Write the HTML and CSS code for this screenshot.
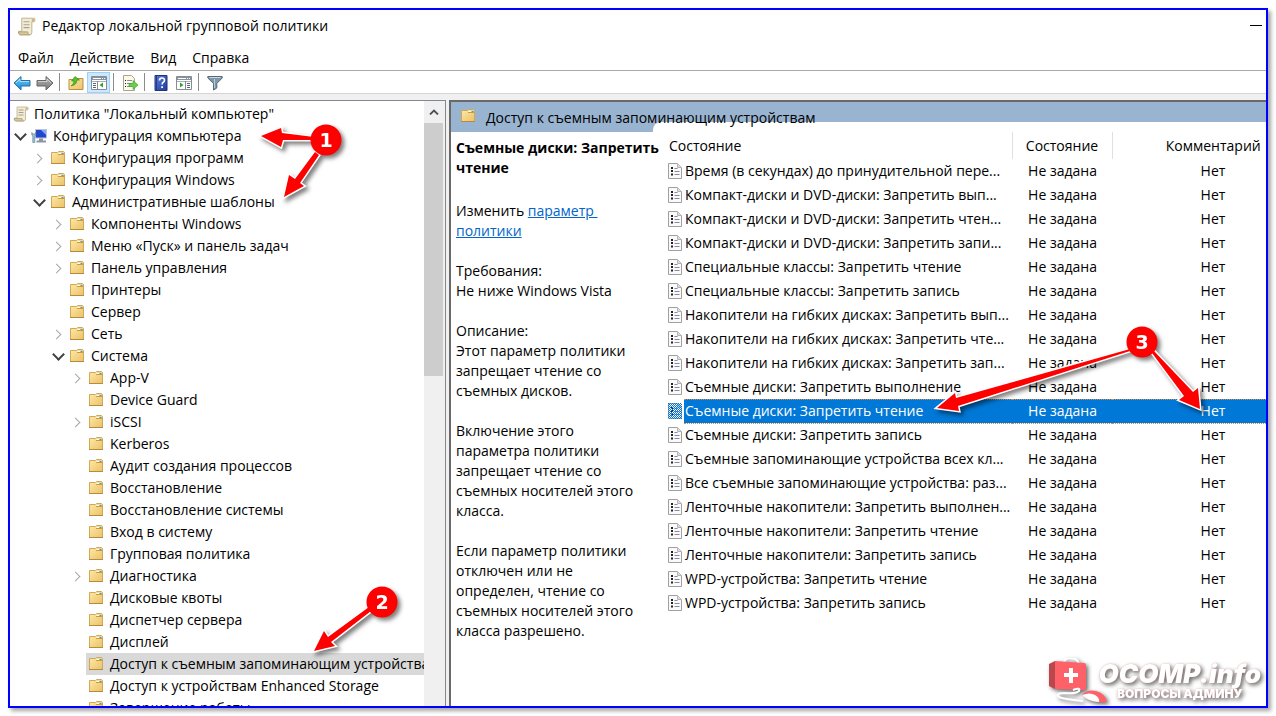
FILE: index.html
```html
<!DOCTYPE html>
<html lang="ru">
<head>
  <meta charset="UTF-8">
  <title>Редактор локальной групповой политики</title>
  <link rel="stylesheet" href="styles.css">
</head>
<body>

  <!-- Иконки -->
  <svg class="sprite" aria-hidden="true">
    <linearGradient id="grad-folder" x1="0" y1="0" x2="1" y2="1">
      <stop offset="0" stop-color="#ffe9a6"/>
      <stop offset="1" stop-color="#e9c269"/>
    </linearGradient>
    <linearGradient id="grad-blue" x1="0" y1="0" x2="0" y2="1">
      <stop offset="0" stop-color="#6fd0fb"/>
      <stop offset="1" stop-color="#1488d6"/>
    </linearGradient>
    <linearGradient id="grad-gray" x1="0" y1="0" x2="0" y2="1">
      <stop offset="0" stop-color="#b5b5b5"/>
      <stop offset="1" stop-color="#777"/>
    </linearGradient>
    <linearGradient id="grad-help" x1="0" y1="0" x2="1" y2="1">
      <stop offset="0" stop-color="#5f7fd8"/>
      <stop offset="1" stop-color="#1f3a9c"/>
    </linearGradient>
    <pattern id="dots" width="2" height="2" patternUnits="userSpaceOnUse">
      <path d="M0 0h1v1H0zM1 1h1v1H1z" fill="#0078d7"/>
    </pattern>
    <symbol id="folder" viewBox="0 0 16 16">
      <path d="M1.500 2.500h6l1-1h5l1 1v11h-13z" fill="url(#grad-folder)" stroke="#d0a858"/>
      <path d="M8 4.500h6" stroke="#c79a45"/>
      <path d="M8.500 3.500h3" stroke="#fff"/>
      <path d="M11.500 3.500h2" stroke="#3f9ad8"/>
      <path d="M1 13.500h14" stroke="#b88a3a"/>
    </symbol>
    <symbol id="scroll" viewBox="0 0 16 16">
      <path d="M4 1h10.500q1.500 1.500 0 3h-2v9q0 2-2 2h-8q-2-1-1-3h2.500z" fill="#f4ecd2" stroke="#b5a684" stroke-width=".7"/>
      <path d="M1.500 12.500h7.500q0 2 1.500 2.500h-8q-1.500-1-1-2.500z" fill="#d9c795" stroke="#a79a78" stroke-width=".7"/>
      <path d="M5.500 4h5M5.500 6.500h5M5.500 9h5" stroke="#a3a09a"/>
      <path d="M12.500 4V2q1-1.500 2 0v2z" fill="#cdb77e"/>
    </symbol>
    <symbol id="computer" viewBox="0 0 16 16">
      <path d="M4.500 1.500h11v8.500h-11z" fill="#2346cf" stroke="#bcc4cf"/>
      <path d="M10 2h5v5z" fill="#7fa8f5"/>
      <path d="M8 10.500h4v2h3v2H5.500v-2H8z" fill="#8995a3"/>
      <path d="M.8 4.500V7l1 1v6.500h2V8l1-1V4.500L3.800 6h-2z" fill="#9fc1d8" stroke="#507892" stroke-width=".6"/>
    </symbol>
    <symbol id="policy" viewBox="0 0 14 16">
      <path d="M.5.500h9l4 4v11h-13z" fill="#fafafa" stroke="#a0a0a0"/>
      <path d="M9.500.500v4h4" fill="#ddd" stroke="#b5b5b5"/>
      <path d="M3 4h2v2H3zM3 7h2v2H3zM3 10.500h2v2H3z" fill="#222"/>
      <path d="M6.500 5.500h3M6.500 8.500h5M6.500 11.500h5" stroke="#8888a2"/>
    </symbol>
    <symbol id="arrow" viewBox="0 0 18 16">
      <path d="M1 8l7-6.500v4h9v5.500h-9v4z" stroke-width="1"/>
      <path d="M3 8l4-4v2.500h9" fill="none" stroke="#fff" stroke-opacity=".5"/>
    </symbol>
    <symbol id="window" viewBox="0 0 16 16">
      <path d="M.5 1.500h15v13H.5z" fill="#fff" stroke="#858c96"/>
      <path d="M1 2h14v3H1z" fill="#8b939f"/>
      <path d="M2 3.500h8M11 3.500h1M13 3.500h1" stroke="#fff"/>
      <path d="M1 6.500h14" stroke="#aab0b8"/>
    </symbol>
  </svg>

  <main class="window">
    <header class="titlebar">
      <svg class="title-icon"><use href="#scroll"/></svg>
      <span class="title">Редактор локальной групповой политики</span>
      <button class="minimize" aria-label="Свернуть"></button>
    </header>

    <nav class="menu">
      <button>Файл</button>
      <button>Действие</button>
      <button>Вид</button>
      <button>Справка</button>
    </nav>

    <div class="toolbar">
      <button aria-label="Назад"><svg class="arrow-back"><use href="#arrow"/></svg></button>
      <button aria-label="Вперед"><svg class="arrow-next"><use href="#arrow"/></svg></button>
      <span class="sep"></span>
      <button aria-label="На уровень вверх">
        <svg viewBox="0 0 16 16">
          <path d="M1 4.500h5l1-1h8v11H1z" fill="url(#grad-folder)" stroke="#b98f41"/>
          <path d="M3 11q3-2 3-5H3.500L7 1.500 11.500 5H9q0 5-6 6z" fill="#55c02d" stroke="#2c8a18" stroke-width=".6"/>
        </svg>
      </button>
      <button class="active" aria-label="Дерево консоли">
        <svg viewBox="0 0 16 16">
          <use href="#window"/>
          <path d="M6.500 6v8" stroke="#858c96"/>
          <path d="M2 8.500h3M2 10.500h3M2 12.500h3" stroke="#5a6575"/>
          <path d="M12 7.500v5L8.500 10z" fill="#2fa52c"/>
        </svg>
      </button>
      <span class="sep"></span>
      <button aria-label="Экспорт списка">
        <svg viewBox="0 0 16 16">
          <path d="M1.500.5h8l3 3v12h-11z" fill="#fdf9e8" stroke="#a8a48f"/>
          <path d="M3 5.500h1M3 8.500h1M3 11.500h1" stroke="#222"/>
          <path d="M5 5.500h5M5 8.500h5M5 11.500h5" stroke="#8889a8"/>
          <path d="M7 8.500h4V5.500l5 4.500-5 4.500v-3H7z" fill="#67cf4c" stroke="#3da02b" stroke-width=".6"/>
        </svg>
      </button>
      <span class="sep"></span>
      <button aria-label="Справка">
        <svg viewBox="0 0 16 16">
          <path d="M2 .5h12v15H2z" fill="url(#grad-help)" stroke="#1c3279"/>
          <path d="M3.500 1v14" stroke="#203a94"/>
          <path d="M6.500 5.500q0-2.500 2.500-2.500 2.500 0 2.500 2.200 0 1.300-1.300 2.100-1.100.7-1.100 2.200" fill="none" stroke="#fff" stroke-width="1.600"/>
          <path d="M8.200 11.200h1.800v1.800H8.200z" fill="#fff"/>
        </svg>
      </button>
      <button aria-label="Область действий">
        <svg viewBox="0 0 16 16">
          <use href="#window"/>
          <path d="M9.500 6v8" stroke="#858c96"/>
          <path d="M11 8.500h3M11 10.500h3M11 12.500h3" stroke="#5a6575"/>
          <path d="M4 7.500v5L7.500 10z" fill="#2fa52c"/>
        </svg>
      </button>
      <span class="sep"></span>
      <button aria-label="Фильтр">
        <svg viewBox="0 0 16 16">
          <path d="M.8 1.500h14.400v1.500L9.800 8.500V13L6.500 15V8.500L.8 3z" fill="#7f97a8" stroke="#536a7b"/>
          <path d="M2.500 2.500h11" stroke="#c9d8e2"/>
          <path d="M7.500 4v9" stroke="#b9cbd7"/>
        </svg>
      </button>
    </div>

    <div class="panes">
      <section class="tree-pane">
        <ul class="tree">
          <li class="level-0"><svg><use href="#scroll"/></svg>Политика "Локальный компьютер"</li>
          <li class="level-1"><button class="toggle open" aria-label="Свернуть"></button><svg><use href="#computer"/></svg>Конфигурация компьютера</li>
          <li class="level-2"><button class="toggle" aria-label="Развернуть"></button><svg><use href="#folder"/></svg>Конфигурация программ</li>
          <li class="level-2"><button class="toggle" aria-label="Развернуть"></button><svg><use href="#folder"/></svg>Конфигурация Windows</li>
          <li class="level-2"><button class="toggle open" aria-label="Свернуть"></button><svg><use href="#folder"/></svg>Административные шаблоны</li>
          <li class="level-3"><button class="toggle" aria-label="Развернуть"></button><svg><use href="#folder"/></svg>Компоненты Windows</li>
          <li class="level-3"><button class="toggle" aria-label="Развернуть"></button><svg><use href="#folder"/></svg>Меню «Пуск» и панель задач</li>
          <li class="level-3"><button class="toggle" aria-label="Развернуть"></button><svg><use href="#folder"/></svg>Панель управления</li>
          <li class="level-3 leaf"><svg><use href="#folder"/></svg>Принтеры</li>
          <li class="level-3 leaf"><svg><use href="#folder"/></svg>Сервер</li>
          <li class="level-3"><button class="toggle" aria-label="Развернуть"></button><svg><use href="#folder"/></svg>Сеть</li>
          <li class="level-3"><button class="toggle open" aria-label="Свернуть"></button><svg><use href="#folder"/></svg>Система</li>
          <li class="level-4"><button class="toggle" aria-label="Развернуть"></button><svg><use href="#folder"/></svg>App-V</li>
          <li class="level-4 leaf"><svg><use href="#folder"/></svg>Device Guard</li>
          <li class="level-4"><button class="toggle" aria-label="Развернуть"></button><svg><use href="#folder"/></svg>iSCSI</li>
          <li class="level-4 leaf"><svg><use href="#folder"/></svg>Kerberos</li>
          <li class="level-4 leaf"><svg><use href="#folder"/></svg>Аудит создания процессов</li>
          <li class="level-4 leaf"><svg><use href="#folder"/></svg>Восстановление</li>
          <li class="level-4 leaf"><svg><use href="#folder"/></svg>Восстановление системы</li>
          <li class="level-4 leaf"><svg><use href="#folder"/></svg>Вход в систему</li>
          <li class="level-4 leaf"><svg><use href="#folder"/></svg>Групповая политика</li>
          <li class="level-4"><button class="toggle" aria-label="Развернуть"></button><svg><use href="#folder"/></svg>Диагностика</li>
          <li class="level-4 leaf"><svg><use href="#folder"/></svg>Дисковые квоты</li>
          <li class="level-4 leaf"><svg><use href="#folder"/></svg>Диспетчер сервера</li>
          <li class="level-4 leaf"><svg><use href="#folder"/></svg>Дисплей</li>
          <li class="level-4 leaf"><span class="current"><svg><use href="#folder"/></svg>Доступ к съемным запоминающим устройствам</span></li>
          <li class="level-4 leaf"><svg><use href="#folder"/></svg>Доступ к устройствам Enhanced Storage</li>
          <li class="level-4 leaf"><svg><use href="#folder"/></svg>Завершение работы</li>
        </ul>
        <div class="scrollbar">
          <button aria-label="Вверх"><svg viewBox="0 0 10 6"><path d="M1 5.500l4-4 4 4" fill="none" stroke="#505050" stroke-width="1.800"/></svg></button>
          <div class="thumb"></div>
        </div>
      </section>

      <section class="details">
        <div class="details-head">
          <svg><use href="#folder"/></svg>
          <h1>Доступ к съемным запоминающим устройствам</h1>
        </div>
        <div class="details-body">
          <div class="description">
            <h2>Съемные диски: Запретить<br>чтение</h2>
            <p>Изменить <a href="#">параметр&nbsp; политики</a></p>
            <p>Требования:<br>Не ниже Windows Vista</p>
            <p>Описание:<br>Этот параметр политики запрещает чтение со съемных дисков.</p>
            <p>Включение этого параметра политики запрещает чтение со съемных носителей этого класса.</p>
            <p>Если параметр политики отключен или не определен, чтение со съемных носителей этого класса разрешено.</p>
          </div>

          <div class="list">
            <table>
              <thead>
                <tr><th class="col-name" colspan="2">Состояние</th><th class="col-state">Состояние</th><th class="col-comment">Комментарий</th></tr>
              </thead>
              <tbody>
                <tr><td class="icon"><svg><use href="#policy"/></svg></td><td>Время (в секундах) до принудительной пере...</td><td class="col-state">Не задана</td><td class="col-comment">Нет</td></tr>
                <tr><td class="icon"><svg><use href="#policy"/></svg></td><td>Компакт-диски и DVD-диски: Запретить вып...</td><td class="col-state">Не задана</td><td class="col-comment">Нет</td></tr>
                <tr><td class="icon"><svg><use href="#policy"/></svg></td><td>Компакт-диски и DVD-диски: Запретить чтен...</td><td class="col-state">Не задана</td><td class="col-comment">Нет</td></tr>
                <tr><td class="icon"><svg><use href="#policy"/></svg></td><td>Компакт-диски и DVD-диски: Запретить запи...</td><td class="col-state">Не задана</td><td class="col-comment">Нет</td></tr>
                <tr><td class="icon"><svg><use href="#policy"/></svg></td><td>Специальные классы: Запретить чтение</td><td class="col-state">Не задана</td><td class="col-comment">Нет</td></tr>
                <tr><td class="icon"><svg><use href="#policy"/></svg></td><td>Специальные классы: Запретить запись</td><td class="col-state">Не задана</td><td class="col-comment">Нет</td></tr>
                <tr><td class="icon"><svg><use href="#policy"/></svg></td><td>Накопители на гибких дисках: Запретить вып...</td><td class="col-state">Не задана</td><td class="col-comment">Нет</td></tr>
                <tr><td class="icon"><svg><use href="#policy"/></svg></td><td>Накопители на гибких дисках: Запретить чте...</td><td class="col-state">Не задана</td><td class="col-comment">Нет</td></tr>
                <tr><td class="icon"><svg><use href="#policy"/></svg></td><td>Накопители на гибких дисках: Запретить зап...</td><td class="col-state">Не задана</td><td class="col-comment">Нет</td></tr>
                <tr><td class="icon"><svg><use href="#policy"/></svg></td><td>Съемные диски: Запретить выполнение</td><td class="col-state">Не задана</td><td class="col-comment">Нет</td></tr>
                <tr class="selected"><td class="icon"><svg><use href="#policy"/><rect width="14" height="16" fill="url(#dots)"/></svg></td><td>Съемные диски: Запретить чтение</td><td class="col-state">Не задана</td><td class="col-comment">Нет</td></tr>
                <tr><td class="icon"><svg><use href="#policy"/></svg></td><td>Съемные диски: Запретить запись</td><td class="col-state">Не задана</td><td class="col-comment">Нет</td></tr>
                <tr><td class="icon"><svg><use href="#policy"/></svg></td><td>Съемные запоминающие устройства всех кл...</td><td class="col-state">Не задана</td><td class="col-comment">Нет</td></tr>
                <tr><td class="icon"><svg><use href="#policy"/></svg></td><td>Все съемные запоминающие устройства: раз...</td><td class="col-state">Не задана</td><td class="col-comment">Нет</td></tr>
                <tr><td class="icon"><svg><use href="#policy"/></svg></td><td>Ленточные накопители: Запретить выполнен...</td><td class="col-state">Не задана</td><td class="col-comment">Нет</td></tr>
                <tr><td class="icon"><svg><use href="#policy"/></svg></td><td>Ленточные накопители: Запретить чтение</td><td class="col-state">Не задана</td><td class="col-comment">Нет</td></tr>
                <tr><td class="icon"><svg><use href="#policy"/></svg></td><td>Ленточные накопители: Запретить запись</td><td class="col-state">Не задана</td><td class="col-comment">Нет</td></tr>
                <tr><td class="icon"><svg><use href="#policy"/></svg></td><td>WPD-устройства: Запретить чтение</td><td class="col-state">Не задана</td><td class="col-comment">Нет</td></tr>
                <tr><td class="icon"><svg><use href="#policy"/></svg></td><td>WPD-устройства: Запретить запись</td><td class="col-state">Не задана</td><td class="col-comment">Нет</td></tr>
              </tbody>
            </table>
          </div>
        </div>
      </section>
    </div>
  </main>

  <!-- Пометки со стрелками -->
  <svg class="callout callout-1" viewBox="250 115 110 95">
    <path d="M261 136l20-8 1 5 32 4v3h-31l-2 7z"/>
    <path d="M284 197l5-22 6 4 20-27 4 3-19 28 4 3z"/>
    <circle cx="326" cy="140" r="15.500"/>
    <text x="326" y="147">1</text>
  </svg>
  <svg class="callout callout-2" viewBox="300 580 110 85">
    <path d="M314 651l10-20 4 6 41-30 2 4-40 31 4 4z"/>
    <circle cx="382" cy="602" r="15.500"/>
    <text x="382" y="609">2</text>
  </svg>
  <svg class="callout callout-3" viewBox="926 320 290 100">
    <path d="M937 408l18-15 1 5 174-49v2l-172 55 1 5z"/>
    <path d="M1200 409l-2-21-5 4-39-41-2 2 32 43-5 4z"/>
    <circle cx="1142" cy="342" r="15.500"/>
    <text x="1142" y="349">3</text>
  </svg>

  <div class="logo">
    <svg viewBox="0 0 62 48">
      <path d="M17 5q0-5 6-5 8 0 9 7" fill="none" stroke="#fff" stroke-width="2"/>
      <path d="M2 6l6-3v28l-6-3z" fill="#b9474c"/>
      <path d="M8 3l29 2q2 0 2 2v23q0 2-2 2l-29-1z" fill="#ff6168"/>
      <path d="M22 10h4v5h5v4h-5v6h-4v-6h-5v-4h5z" fill="#fff"/>
      <path d="M26 32q8-3 6 1-3 3-14 2-10 0-6 4 4 2 24 4" fill="none" stroke="#fff" stroke-width="2"/>
      <path d="M35 37q5-6 14-4 10 3 11 11-14 2-25-7z" fill="#ff6168"/>
      <path d="M35 37q8-3 13 0 5 3 4 7-10 0-17-7z" fill="#fff"/>
    </svg>
    <div class="logo-text">
      <strong>OCOMP.info</strong>
      <span>ВОПРОСЫ АДМИНУ</span>
    </div>
  </div>

</body>
</html>
```
FILE: styles.css
```css
* {
  box-sizing: border-box;
}

body {
  margin: 0;
  padding: 8px;
  height: 100vh;
  display: flex;
  position: relative;
  overflow: hidden;
  background: #fff;
  color: #000;
  font-family: "Open Sans", "Noto Sans", sans-serif;
  font-size: 14px;
  line-height: 20px;
}

button {
  font: inherit;
  color: inherit;
  background: none;
  border: none;
  padding: 0;
}

.sprite {
  position: absolute;
  width: 0;
  height: 0;
}

.window {
  flex: 1;
  min-width: 0;
  display: flex;
  flex-direction: column;
  border: 2px solid #0000ff;
  background: #fff;
  box-shadow: 3px 3px 4px rgba(0, 0, 0, 0.35);
}

/* Заголовок и меню */
.titlebar {
  display: flex;
  align-items: center;
  height: 32px;
  padding: 0 4px 0 7px;
}

.title-icon {
  width: 19px;
  height: 19px;
}

.title {
  flex: 1;
  margin-left: 6px;
}

.minimize {
  width: 12px;
  height: 3px;
  border-top: 1px solid #000;
}

.menu {
  display: flex;
  gap: 16px;
  height: 29px;
  padding: 0 8px;
  border-bottom: 1px solid #a9a9a9;
}

.menu button {
  height: 31px;
}

.toolbar {
  display: flex;
  align-items: center;
  height: 23px;
  border-bottom: 1px solid #d5d5d5;
}

.toolbar button {
  display: flex;
  align-items: center;
  justify-content: center;
  width: 23px;
  height: 21px;
  padding-top: 2px;
}

.toolbar svg {
  width: 16px;
  height: 16px;
}

.toolbar .arrow-back,
.toolbar .arrow-next {
  width: 18px;
}

.arrow-back {
  fill: url(#grad-blue);
  stroke: #2b6f9f;
}

.arrow-next {
  fill: url(#grad-gray);
  stroke: #666;
  transform: scaleX(-1);
}

.toolbar .active {
  border: 1px solid #99d1ff;
  background: #cce8ff;
}

.sep {
  width: 1px;
  height: 18px;
  margin: 0 4px 0 3px;
  background: #8c8c8c;
}

/* Панели */
.panes {
  flex: 1;
  min-height: 0;
  display: flex;
  gap: 3px;
  padding-top: 6px;
  background: #f0f0f0;
}

.tree-pane {
  display: flex;
  width: 436px;
  border: 1px solid #828790;
  border-width: 1px 1px 0 0;
  background: #fff;
}

.tree {
  flex: 1;
  min-width: 0;
  margin: 0;
  padding: 2px 0 0 3px;
  list-style: none;
  overflow: hidden;
}

.tree li,
.current {
  display: flex;
  align-items: center;
  height: 22px;
  white-space: nowrap;
}

.tree svg {
  flex: none;
  width: 16px;
  height: 16px;
  margin-right: 6px;
}

.tree .level-0 svg {
  margin-right: 5px;
}

.level-2 {
  padding-left: 19px;
}

.level-3 {
  padding-left: 38px;
}

.level-4 {
  padding-left: 57px;
}

.leaf::before {
  content: "";
  flex: none;
  width: 18px;
}

.current {
  flex: 1;
  margin-left: -2px;
  padding-left: 2px;
  background: #d9d9d9;
}

.toggle {
  flex: none;
  display: flex;
  align-items: center;
  justify-content: center;
  width: 14px;
  height: 14px;
  margin-right: 4px;
  padding-right: 4px;
}

.toggle.open {
  padding: 0 0 4px;
}

.toggle::before {
  content: "";
  width: 6px;
  height: 6px;
  border: solid #a6a6a6;
  border-width: 1px 1px 0 0;
  transform: rotate(45deg);
}

.toggle.open::before {
  width: 7px;
  height: 7px;
  border-color: #404040;
  border-width: 2px 2px 0 0;
  transform: rotate(135deg);
}

.scrollbar {
  width: 21px;
  background: #f0f0f0;
  padding-right: 2px;
}

.scrollbar button {
  display: flex;
  align-items: center;
  justify-content: center;
  width: 100%;
  height: 22px;
}

.scrollbar svg {
  width: 10px;
  height: 6px;
}

.thumb {
  height: 253px;
  background: #cdcdcd;
}

.details {
  flex: 1;
  min-width: 0;
  display: flex;
  flex-direction: column;
  border: 2px solid #696969;
  border-width: 2px 0 0 2px;
  background: #fff;
}

.details-head {
  display: flex;
  height: 30px;
  padding: 6px 9px;
  background: #99b4d1;
}

.details-head svg {
  width: 16px;
  height: 16px;
}

.details-head h1 {
  position: relative;
  z-index: 1;
  margin: 0 0 0 10px;
  font-size: 14px;
  font-weight: normal;
}

.details-body {
  flex: 1;
  display: flex;
}

.description {
  width: 202px;
  padding: 6px 0 0 5px;
}

.description h2 {
  position: relative;
  z-index: 1;
  margin: 0 0 23px;
  font-size: 14px;
  white-space: nowrap;
}

.description p {
  width: 184px;
  margin: 0 0 20px;
}

.description a {
  color: #0066cc;
}

.list {
  flex: 1;
  min-width: 0;
  margin-top: -10px;
  padding-top: 10px;
  border-radius: 8px 0 0 0;
  background: #fff;
}

table {
  width: 100%;
  border-collapse: collapse;
}

th {
  height: 27px;
  padding: 0;
  font-weight: normal;
  border-right: 1px solid #e0e0e0;
}

th:last-child {
  border-right: none;
}

td {
  height: 24px;
  padding: 0 0 0 1px;
  white-space: nowrap;
}

th.col-name {
  padding-left: 16px;
  text-align: left;
}

.col-state {
  width: 100px;
  text-align: center;
}

.col-comment {
  width: 154px;
  padding-left: 48px;
  text-align: center;
}

.icon {
  width: 31px;
  padding-left: 15px;
}

.icon svg {
  display: block;
  width: 14px;
  height: 16px;
}

.selected td {
  color: #fff;
  background: #0078d7;
  border: 1px dotted #d98a45;
  border-width: 1px 0;
}

.selected td.icon {
  background: none;
  border: none;
}

/* Пометки */
.callout {
  position: absolute;
  filter: drop-shadow(3px 3px 2px rgba(0, 0, 0, 0.5));
}

.callout path {
  fill: #ff0000;
  stroke: #fff;
  stroke-width: 3px;
  paint-order: stroke;
}

.callout circle {
  fill: #ff0000;
}

.callout text {
  fill: #fff;
  font-family: "DejaVu Sans", sans-serif;
  font-size: 19px;
  font-weight: bold;
  text-anchor: middle;
}

.callout-1 {
  left: 250px;
  top: 115px;
  width: 110px;
  height: 95px;
}

.callout-2 {
  left: 300px;
  top: 580px;
  width: 110px;
  height: 85px;
}

.callout-3 {
  left: 926px;
  top: 320px;
  width: 290px;
  height: 100px;
}

/* Логотип */
.logo {
  position: absolute;
  right: 15px;
  bottom: 10px;
  display: flex;
  filter: drop-shadow(2px 2px 2px rgba(0, 0, 0, 0.6));
}

.logo > svg {
  width: 62px;
  height: 48px;
  margin-right: -10px;
}

.logo-text {
  display: flex;
  flex-direction: column;
  align-items: center;
  padding-top: 4px;
  color: #fff;
  font-family: Inter, sans-serif;
  font-weight: 900;
  text-shadow: 0 0 1px #e58f92;
}

.logo-text strong {
  font-size: 26px;
  font-style: italic;
  font-weight: 900;
  line-height: 24px;
}

.logo-text span {
  font-size: 12px;
  line-height: 16px;
}
```
